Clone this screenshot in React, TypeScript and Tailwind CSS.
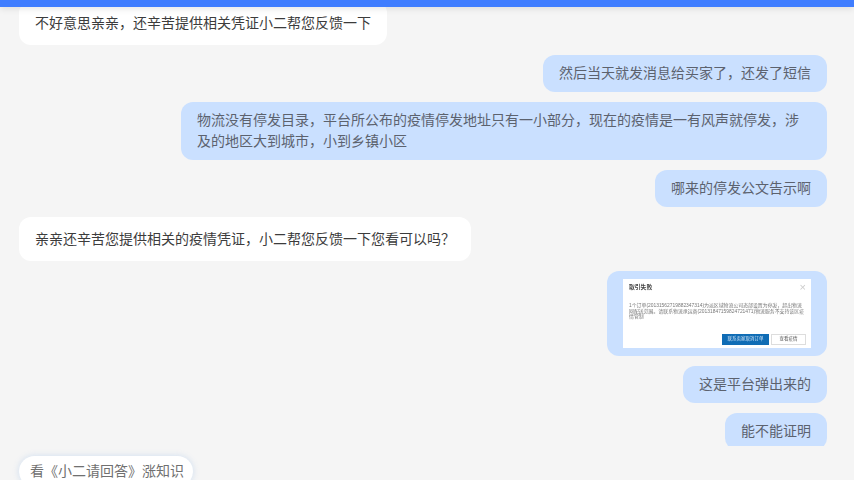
const FONT = "font-['Liberation_Sans','Noto_Sans_CJK_SC',sans-serif]";

function Left({ text }: { text: string }) {
  return (
    <div className="flex justify-start">
      <div className="rounded-xl bg-white px-4 py-3 text-[14px] leading-[20px] text-[#3c3c3c]">{text}</div>
    </div>
  );
}

function Right({ text }: { text: string }) {
  return (
    <div className="flex justify-end">
      <div className="rounded-xl bg-[#cae0ff] px-4 py-2 text-[14px] leading-[21px] text-[#5c626e]">{text}</div>
    </div>
  );
}

function Thumbnail() {
  return (
    <div className="flex h-[69px] w-[188px] flex-col bg-white pt-[4px] pr-[5px] pl-[6px] blur-[0.4px]">
      <div className="flex items-center justify-between">
        <span className="text-[5.8px] leading-[8px] font-bold text-[#444]">取引失败</span>
        <span className="text-[11px] leading-[8px] text-[#ccc]">×</span>
      </div>
      <p className="mt-[12px] text-[4.9px] leading-[5.6px] text-[#777]">
        1个订单(20131562719882347314)为派区域物流公司态部设置为停发，超出物流网配送范围。请联系物流承运商(20131847159824721471)物流服务不支持该区疫情管制
      </p>
      <div className="mt-auto mb-[3px] flex justify-end gap-[2px]">
        <span className="flex h-[11px] w-[47px] items-center justify-center bg-[#0f6cb5] text-[4.5px] text-[#cfe3f5]">
          联系卖家取消订单
        </span>
        <span className="flex h-[11px] w-[35px] items-center justify-center border border-[#ddd] text-[4.5px] text-[#555]">
          查看疫情
        </span>
      </div>
    </div>
  );
}

export default function App() {
  return (
    <div className={`relative h-[480px] w-[854px] overflow-hidden bg-[#f5f5f5] ${FONT}`}>
      {/* top bar sits over the scrolled list */}
      <div className="absolute inset-x-0 top-0 z-10 h-[7px] bg-[#3f7dff] shadow-[0_2px_6px_rgba(0,0,0,0.1)]" />

      <div className="flex flex-col gap-[10px] pt-[1px] pr-[27px] pl-[19px]">
        <Left text="不好意思亲亲，还辛苦提供相关凭证小二帮您反馈一下" />
        <Right text="然后当天就发消息给买家了，还发了短信" />
        <div className="flex justify-end">
          <div className="w-[646px] rounded-xl bg-[#cae0ff] px-4 py-2 text-[14px] leading-[21px] text-[#5c626e]">
            物流没有停发目录，平台所公布的疫情停发地址只有一小部分，现在的疫情是一有风声就停发，涉及的地区大到城市，小到乡镇小区
          </div>
        </div>
        <Right text="哪来的停发公文告示啊" />
        <Left text="亲亲还辛苦您提供相关的疫情凭证，小二帮您反馈一下您看可以吗？" />
        <div className="flex justify-end">
          <div className="rounded-xl bg-[#cae0ff] px-4 py-2">
            <Thumbnail />
          </div>
        </div>
        <Right text="这是平台弹出来的" />
        <div className="flex h-[33px] justify-end overflow-hidden">
          <div className="h-[37px] rounded-xl bg-[#cae0ff] px-4 py-2 text-[14px] leading-[21px] text-[#5c626e]">能不能证明</div>
        </div>
        <div className="flex">
          <div className="w-[174px] rounded-full bg-white px-[11px] py-[5px] text-[14px] leading-[21px] whitespace-nowrap text-[#707070] shadow-[0_0_6px_rgba(120,170,230,0.3)]">
            看《小二请回答》涨知识
          </div>
        </div>
      </div>
    </div>
  );
}
